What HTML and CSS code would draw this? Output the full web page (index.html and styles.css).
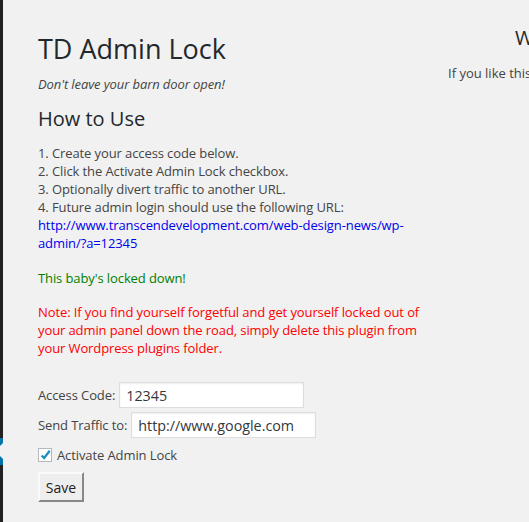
FILE: index.html
```html
<!DOCTYPE html>
<html>
<head>
<meta charset="utf-8">
<link rel="stylesheet" href="styles.css">
</head>
<body>
<div class="page">
  <div class="adminbar">
    <div class="menu-dark top"></div>
    <div class="menu-current"><span class="arrow"></span></div>
    <div class="menu-dark"></div>
  </div>
  <div class="main">
    <h1 class="title">TD Admin Lock</h1>
    <p class="tagline">Don't leave your barn door open!</p>
    <h2 class="howto">How to Use</h2>
    <div class="steps">
      <div>1. Create your access code below.</div>
      <div>2. Click the Activate Admin Lock checkbox.</div>
      <div>3. Optionally divert traffic to another URL.</div>
      <div>4. Future admin login should use the following URL:</div>
      <a class="url" href="#">http://www.transcendevelopment.com/web-design-news/wp-admin/?a=12345</a>
    </div>
    <p class="status">This baby's locked down!</p>
    <p class="note">Note: If you find yourself forgetful and get yourself locked out of your admin panel down the road, simply delete this plugin from your Wordpress plugins folder.</p>
    <form class="form">
      <div class="row"><label>Access Code:</label><input class="field" type="text" value="12345"></div>
      <div class="row"><label>Send Traffic to:</label><input class="field" type="text" value="http://www.google.com"></div>
      <div class="row check"><span class="box"><svg width="14" height="14" viewBox="0 0 14 14"><path d="M3 7.5 L6 10.5 L12.5 2" fill="none" stroke="#1e8cbe" stroke-width="2.6"/></svg></span><span>Activate Admin Lock</span></div>
      <div class="row"><button class="save" type="button">Save</button></div>
    </form>
  </div>
  <div class="side">
    <h3 class="side-title">Want to help?</h3>
    <p class="side-text">If you like this plugin</p>
  </div>
</div>
</body>
</html>
```
FILE: styles.css
```css
html, body {
  margin: 0;
  padding: 0;
  background: #f1f1f1;
  font-family: "Open Sans", "Liberation Sans", sans-serif;
  color: #444;
  font-size: 13px;
  overflow: hidden;
}
.page {
  display: flex;
  min-height: 522px;
  width: 529px;
}
.adminbar {
  width: 3px;
  flex: none;
  display: flex;
  flex-direction: column;
}
.menu-dark { background: #222; }
.menu-dark.top { height: 438px; }
.menu-dark:last-child { flex: 1; }
.menu-current {
  height: 27px;
  background: #0073aa;
  position: relative;
}
.arrow {
  position: absolute;
  right: 0;
  top: 5px;
  width: 0;
  height: 0;
  border: 8px solid transparent;
  border-right-color: #f1f1f1;
  border-left-width: 0;
}
.main {
  width: 410px;
  flex: none;
  padding: 0 0 0 35px;
  letter-spacing: -0.1px;
}
.title {
  font-weight: 400;
  font-size: 27px;
  color: #23282d;
  margin: 31px 0 0;
  line-height: 1.3;
  letter-spacing: 0;
}
.tagline {
  font-style: italic;
  margin: 9px 0 0;
  font-size: 13px;
  color: #444;
}
.howto {
  font-weight: 400;
  font-size: 20px;
  color: #23282d;
  margin: 13px 0 0;
  line-height: 1.3;
  letter-spacing: 0;
}
.steps {
  margin-top: 12px;
  line-height: 18px;
}
.url {
  color: #0000ee;
  text-decoration: none;
  display: block;
  width: 380px;
}
.status {
  color: #008000;
  margin: 17px 0 0;
  line-height: 18px;
}
.note {
  color: #ff0000;
  margin: 16px 0 0;
  line-height: 18px;
  width: 390px;
}
.form {
  margin-top: 25px;
  display: flex;
  flex-direction: column;
  gap: 4px;
}
.row {
  display: flex;
  align-items: center;
}
.row label { margin-right: 4px; }
.field {
  width: 185px;
  height: 26px;
  box-sizing: border-box;
  border: 1px solid #ddd;
  background: #fff;
  font-family: "Open Sans", "Liberation Sans", sans-serif;
  font-size: 14.3px;
  color: #32373c;
  padding: 2px 6px;
  box-shadow: inset 0 1px 2px rgba(0,0,0,0.07);
}
.check { margin-top: 4px; }
.box {
  width: 14px;
  height: 14px;
  box-sizing: border-box;
  border: 1px solid #b4b9be;
  background: #fff;
  margin-right: 5px;
  display: flex;
}
.box svg { margin: -1px 0 0 0; }
.save {
  margin-top: 4px;
  font-family: "Open Sans", "Liberation Sans", sans-serif;
  font-size: 14px;
  color: #222;
  background: #eeeeee;
  border: 2px solid;
  border-color: #fafafa #888 #888 #fafafa;
  height: 30px;
  width: 46px;
  padding: 0;
}
.side {
  flex: 1;
  white-space: nowrap;
  overflow: hidden;
}
.side-title {
  font-weight: 400;
  font-size: 20px;
  color: #23282d;
  margin: 24px 0 0 67px;
}
.side-text {
  margin: 13px 0 0;
}
```
